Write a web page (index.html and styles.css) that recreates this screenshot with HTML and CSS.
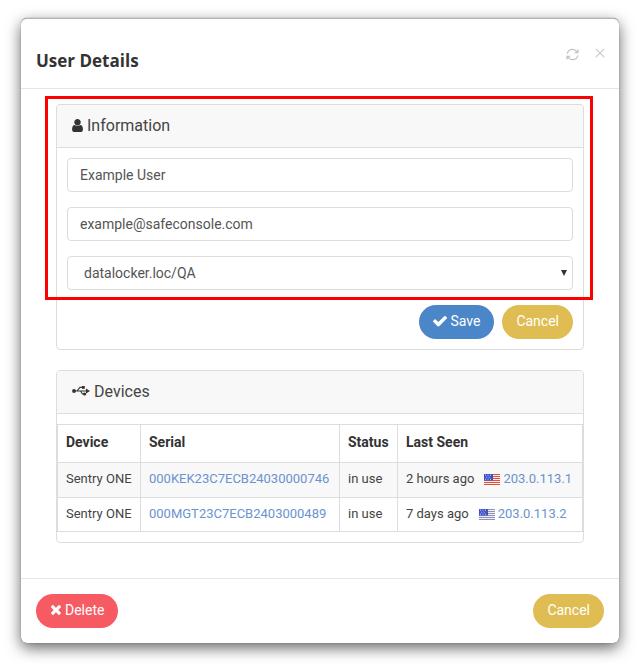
FILE: index.html
```html
<!DOCTYPE html>
<html lang="en">
<head>
<meta charset="utf-8">
<title>User Details</title>
<link rel="stylesheet" href="styles.css">
</head>
<body>
<div class="modal">
  <header class="modal-header">
    <h1 class="modal-title">User Details</h1>
    <div class="tools">
      <svg class="tool-refresh" viewBox="0 0 13 13"><path class="refresh-arc" d="M1.2 5.6C1.8 3 3.8 1.3 6.4 1.3c1.6 0 3 .7 4 1.9M11.8 7.4c-.6 2.6-2.6 4.3-5.2 4.3-1.6 0-3-.7-4-1.9"/><path class="refresh-head" d="M12.6 .9v4.4H8.2zM.4 12.1V7.7h4.4z"/></svg>
      <svg class="tool-close" viewBox="0 0 12 12"><path d="M1 1l10 10M11 1L1 11"/></svg>
    </div>
  </header>
  <main class="modal-body">
    <section class="panel panel-info">
      <h2 class="panel-heading">
        <svg class="icon-user" viewBox="256 128 1280 1536"><path d="M1536 1399q0 109-62.5 187t-150.5 78h-854q-88 0-150.5-78t-62.5-187q0-85 8.5-160.5t31.5-152 58.5-131 94-89 134.5-34.5q131 128 313 128t313-128q76 0 134.5 34.5t94 89 58.5 131 31.5 152 8.5 160.5zm-256-887q0 159-112.5 271.5t-271.5 112.5-271.5-112.5-112.5-271.5 112.5-271.5 271.5-112.5 271.5 112.5 112.5 271.5z"/></svg>
        <span>Information</span>
      </h2>
      <form class="panel-form">
        <input class="field" type="text" value="Example User">
        <input class="field" type="text" value="example@safeconsole.com">
        <div class="select-wrap">
          <select class="field field-select"><option>datalocker.loc/QA</option></select>
        </div>
        <div class="form-actions">
          <button class="btn btn-blue" type="button">
            <svg class="icon-check" viewBox="121 390 1550 1130"><path d="M1671 566q0 40-28 68l-724 724-136 136q-28 28-68 28t-68-28l-136-136-362-362q-28-28-28-68t28-68l136-136q28-28 68-28t68 28l294 295 656-657q28-28 68-28t68 28l136 136q28 28 28 68z"/></svg>
            Save
          </button>
          <button class="btn btn-yellow" type="button">Cancel</button>
        </div>
      </form>
    </section>
    <section class="panel panel-devices">
      <h2 class="panel-heading">
        <svg class="icon-usb" viewBox="0 0 18 12"><circle cx="2" cy="6" r="1.9"/><path class="usb-line" d="M2 6h13M5 6l3-3.6h2M8.5 6l2 3h1.5"/><path d="M14 3.4L18 6l-4 2.6z"/><rect x="10" y="1" width="2.8" height="2.8"/><circle cx="12.6" cy="9" r="1.6"/></svg>
        <span>Devices</span>
      </h2>
      <table class="devices">
        <thead>
          <tr><th class="col-device">Device</th><th class="col-serial">Serial</th><th class="col-status">Status</th><th>Last Seen</th></tr>
        </thead>
        <tbody>
          <tr class="odd">
            <td>Sentry ONE</td>
            <td><a href="#">000KEK23C7ECB24030000746</a></td>
            <td>in use</td>
            <td><span class="seen">2 hours ago</span><svg class="flag" viewBox="0 0 16 11"><rect width="16" height="11" fill="#f4efec"/><path d="M0 .5h16M0 2.5h16M0 4.5h16M0 6.5h16M0 8.5h16M0 10.5h16" stroke="#e04f3a"/><rect width="9" height="6.5" fill="#3c50c8"/><path d="M1 1.2h1M3.5 1.2h1M6 1.2h1M2.2 3.2h1M4.7 3.2h1M1 5.2h1M3.5 5.2h1M6 5.2h1" stroke="#e3e7f8" stroke-width=".9"/></svg><a href="#">203.0.113.1</a></td>
          </tr>
          <tr>
            <td>Sentry ONE</td>
            <td><a href="#">000MGT23C7ECB2403000489</a></td>
            <td>in use</td>
            <td><span class="seen">7 days ago</span><svg class="flag" viewBox="0 0 16 11"><rect width="16" height="11" fill="#f0eef0"/><path d="M0 .5h16M0 2.5h16M0 4.5h16M0 6.5h16M0 8.5h16M0 10.5h16" stroke="#8f92b4"/><rect width="9" height="6.5" fill="#3c50c8"/><path d="M1 1.2h1M3.5 1.2h1M6 1.2h1M2.2 3.2h1M4.7 3.2h1M1 5.2h1M3.5 5.2h1M6 5.2h1" stroke="#e3e7f8" stroke-width=".9"/></svg><a href="#">203.0.113.2</a></td>
          </tr>
        </tbody>
      </table>
    </section>
  </main>
  <footer class="modal-footer">
    <button class="btn btn-red" type="button">
      <svg class="icon-times" viewBox="190 370 1300 1190"><path d="M1490 1322q0 40-28 68l-136 136q-28 28-68 28t-68-28l-294-294-294 294q-28 28-68 28t-68-28l-136-136q-28-28-28-68t28-68l294-294-294-294q-28-28-28-68t28-68l136-136q28-28 68-28t68 28l294 294 294-294q28-28 68-28t68 28l136 136q28 28 28 68t-28 68l-294 294 294 294q28 28 28 68z"/></svg>
      Delete
    </button>
    <button class="btn btn-yellow" type="button">Cancel</button>
  </footer>
  <div class="highlight"></div>
</div>
</body>
</html>
```

FILE: styles.css
```css
* { box-sizing: border-box; }
html, body { margin: 0; padding: 0; }
body {
  background: #fff;
  font-family: Roboto, "Liberation Sans", sans-serif;
  color: #333;
  min-height: 664px;
  padding: 18px 19px 0 21px;
}
.modal {
  position: relative;
  height: 625px;
  background: #fff;
  border-radius: 6px;
  border-top: 1px solid #b5b5b5;
  box-shadow: 0 0 1px 0 rgba(0,0,0,.6), 0 5px 15px rgba(0,0,0,.6);
  display: flex;
  flex-direction: column;
}
.modal-header {
  height: 70px;
  flex: none;
  border-bottom: 1px solid #e5e5e5;
  padding: 0 15px;
  display: flex;
  justify-content: space-between;
  align-items: flex-start;
}
.modal-title {
  margin: 31px 0 0;
  font-family: "Open Sans", sans-serif;
  font-size: 17px;
  line-height: 22px;
  font-weight: 700;
  color: #333;
}
.tools { display: flex; align-items: flex-start; gap: 16px; margin-top: 29px; margin-right: -1px; }
.tool-refresh { width: 13px; height: 13px; display: block; }
.refresh-arc { fill: none; stroke: #c4c4c4; stroke-width: 1.2; }
.refresh-head { fill: #c4c4c4; }
.tool-close { width: 10px; height: 10px; fill: none; stroke: #cacaca; stroke-width: 1.3; display: block; }
.modal-body { flex: 1; padding: 15px 35px 0; }
.panel {
  border: 1px solid #ddd;
  border-radius: 4px;
  background: #fff;
}
.panel-info { height: 246px; margin-bottom: 20px; }
.panel-devices { height: 173px; }
.panel-heading {
  margin: 0;
  height: 43px;
  background: #f8f8f8;
  border-bottom: 1px solid #ddd;
  border-radius: 3px 3px 0 0;
  padding: 0 15px 2px;
  display: flex;
  align-items: center;
  gap: 4px;
  font-size: 16px;
  font-weight: 400;
  color: #444;
}
.icon-user { width: 11px; height: 13px; fill: #333; display: block; }
.icon-usb { width: 18px; height: 12px; fill: #333; display: block; }
.usb-line { fill: none; stroke: #333; stroke-width: 1.1; }
.panel-form { padding: 10px 10px 0; display: flex; flex-direction: column; gap: 15px; }
.field {
  display: block;
  width: 100%;
  height: 34px;
  border: 1px solid #ddd;
  border-radius: 4px;
  background: #fff;
  padding: 0 12px;
  font-family: inherit;
  font-size: 14px;
  color: #555;
  outline: 0;
}
.select-wrap { position: relative; }
.select-wrap::after {
  content: "";
  position: absolute;
  right: 6px;
  top: 14px;
  border-left: 3px solid transparent;
  border-right: 3px solid transparent;
  border-top: 6px solid #333;
}
.field-select { appearance: none; -webkit-appearance: none; padding-left: 16px; }
.form-actions { display: flex; justify-content: flex-end; gap: 8px; }
.btn {
  height: 34px;
  border: 0;
  border-radius: 17px;
  padding: 0 14px 2px;
  font-family: inherit;
  font-size: 14px;
  color: #fff;
  display: inline-flex;
  align-items: center;
  gap: 3px;
}
.icon-check { width: 14px; height: 11px; fill: #fff; display: block; }
.icon-times { width: 11px; height: 10px; fill: #fff; display: block; margin-right: 1px; }
.btn-blue { background: #4a86c8; }
.btn-yellow { background: #dfbd52; }
.btn-red { background: #f65a62; }
.devices {
  border-collapse: collapse;
  width: 526px;
  margin: 10px 0 0;
  font-size: 13px;
}
.devices th, .devices td {
  border: 1px solid #ddd;
  padding: 0 8px 2px;
  text-align: left;
  white-space: nowrap;
}
.devices th { height: 38px; font-size: 14px; font-weight: 700; color: #333; padding-bottom: 4px; }
.devices td { height: 35px; color: #444; }
.devices tbody tr:last-child td { height: 34px; }
.devices .odd td { background: #f8f8f8; padding-bottom: 4px; }
.col-device { width: 83px; }
.col-serial { width: 199px; }
.col-status { width: 58px; }
.devices a { color: #6a93cf; text-decoration: none; }
.seen { margin-right: 10px; }
.flag { width: 16px; height: 11px; display: inline-block; vertical-align: -2px; margin-right: 3px; }
.modal-footer {
  flex: none;
  height: 65px;
  border-top: 1px solid #e5e5e5;
  padding: 15px 15px 0;
  display: flex;
  justify-content: space-between;
  align-items: flex-start;
}
.highlight {
  position: absolute;
  left: 24px;
  top: 77px;
  width: 548px;
  height: 204px;
  border: 3px solid #f00;
  pointer-events: none;
}
```
